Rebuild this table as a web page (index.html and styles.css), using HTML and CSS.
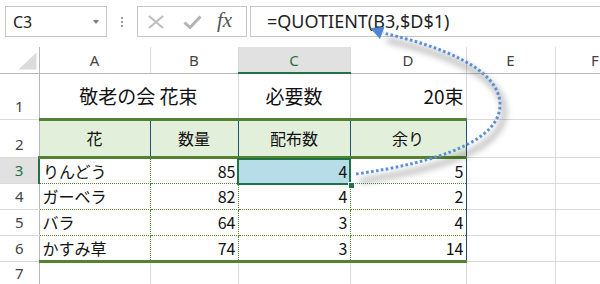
FILE: index.html
```html
<!DOCTYPE html>
<html lang="ja">
<head>
<meta charset="utf-8">
<title>QUOTIENT</title>
<link rel="stylesheet" href="styles.css">
</head>
<body>
<div class="fbar">
  <div class="namebox"><span>C3</span><span class="caret"></span></div>
  <div class="grip"><i></i><i></i><i></i></div>
  <div class="fxbox">
    <svg class="ico-x" width="16" height="14" viewBox="0 0 16 14"><path d="M1 1 L15 13 M15 1 L1 13" stroke="#bdbdbd" stroke-width="2" fill="none"/></svg>
    <svg class="ico-ok" width="19" height="14" viewBox="0 0 19 14"><path d="M1.5 7.5 L7 12.5 L17.5 1.5" stroke="#b3b3b3" stroke-width="3" fill="none"/></svg>
    <span class="fx">fx</span>
  </div>
  <div class="input">=QUOTIENT(B3,$D$1)</div>
</div>
<table class="sheet">
  <colgroup><col class="c0"><col class="ca"><col class="cb"><col class="cc"><col class="cd"><col class="ce"><col class="cf"></colgroup>
  <tr class="hr">
    <th class="corner"><div class="tri"></div></th><th>A</th><th>B</th><th class="on">C</th><th>D</th><th>E</th><th>F</th>
  </tr>
  <tr class="r1">
    <th class="rh">1</th><td colspan="2" class="ctr big">敬老の会 花束</td><td class="ctr big">必要数</td><td class="num big">20束</td><td></td><td></td>
  </tr>
  <tr class="r2">
    <th class="rh">2</th><td class="hd">花</td><td class="hd">数量</td><td class="hd">配布数</td><td class="hd">余り</td><td></td><td></td>
  </tr>
  <tr class="rd">
    <th class="rh on">3</th><td class="dt">りんどう</td><td class="dt num">85</td><td class="dt num sel">4<div class="selbox"></div><div class="handle"></div></td><td class="dt num last">5</td><td></td><td></td>
  </tr>
  <tr class="rd">
    <th class="rh">4</th><td class="dt">ガーベラ</td><td class="dt num">82</td><td class="dt num">4</td><td class="dt num last">2</td><td></td><td></td>
  </tr>
  <tr class="rd">
    <th class="rh">5</th><td class="dt">バラ</td><td class="dt num">64</td><td class="dt num">3</td><td class="dt num last">4</td><td></td><td></td>
  </tr>
  <tr class="rd end">
    <th class="rh">6</th><td class="dt">かすみ草</td><td class="dt num">74</td><td class="dt num">3</td><td class="dt num last">14</td><td></td><td></td>
  </tr>
  <tr class="r7">
    <th class="rh">7</th><td></td><td></td><td></td><td></td><td></td><td></td>
  </tr>
</table>
<svg class="arrow" width="600" height="284" viewBox="0 0 600 284">
  <defs>
    <filter id="blur" x="-20%" y="-20%" width="140%" height="140%"><feGaussianBlur stdDeviation="3"/></filter>
  </defs>
  <path d="M356 174 C440 162 502 140 500 103 C498 68 440 46 383 33" transform="translate(4 7)" stroke="#000" stroke-opacity="0.28" stroke-width="5" fill="none" filter="url(#blur)"/>
  <path d="M356 174 C440 162 502 140 500 103 C498 68 440 46 383 33" stroke="#5b8fd8" stroke-width="3" stroke-dasharray="2.6 2.4" fill="none"/>
  <polygon points="370,28 384.5,27 380,39" fill="#4f86d6"/>
</svg>
</body>
</html>
```
FILE: styles.css
```css
* { box-sizing: border-box; }
html, body { margin: 0; padding: 0; background: #fff; }
body {
  width: 600px; height: 284px; overflow: hidden; position: relative;
  font-family: "Noto Sans", "Noto Sans CJK JP", sans-serif; color: #111;
}

/* formula bar */
.fbar { display: flex; align-items: flex-start; height: 47px; padding: 6px 0 0 5px; }
.namebox {
  width: 102px; height: 31px; border: 1px solid #c6c6c6;
  display: flex; align-items: center; justify-content: space-between;
  padding: 0 7px; font-size: 16px; color: #222;
}
.caret { width: 0; height: 0; border-left: 3.5px solid transparent; border-right: 3.5px solid transparent; border-top: 4px solid #7a7a7a; }
.grip { display: flex; flex-direction: column; gap: 2px; margin: 11px 0 0 14px; width: 3px; }
.grip i { display: block; width: 2px; height: 2px; background: #9a9a9a; }
.fxbox {
  margin-left: 13px; width: 110px; height: 31px; border: 1px solid #c6c6c6;
  display: flex; align-items: center; padding-left: 10px;
}
.ico-ok { margin-left: 19px; }
.fx {
  margin-left: 15px; font-family: "Liberation Serif", serif; font-style: italic;
  font-size: 21px; color: #555; line-height: 29px; position: relative; top: -1px;
}
.input {
  margin-left: 3px; flex: 1; height: 31px; border: 1px solid #c6c6c6; border-right: none;
  padding-left: 16px; font-size: 18px; line-height: 28px; color: #222; white-space: nowrap;
}

/* sheet */
.sheet { border-collapse: collapse; table-layout: fixed; width: 635px; }
.c0 { width: 39px; } .ca { width: 111px; } .cb { width: 88px; } .cc { width: 112px; }
.cd { width: 116px; } .ce { width: 89px; } .cf { width: 80px; }

.sheet th { font-weight: normal; color: #444; font-size: 15px; padding: 0; line-height: 20px; }
.hr th { height: 26px; border-right: 1px solid #dadada; border-bottom: 1px solid #b8b8b8; text-align: center; vertical-align: middle; }
.hr th.corner { border-right: 1px solid #b8b8b8; vertical-align: bottom; padding: 0 2px 3px 0; }
.tri { width: 18px; height: 17px; margin-left: auto; background: #dcdcdc; clip-path: polygon(100% 0, 100% 100%, 0 100%); }
.hr th.on { background: #e1e1e1; color: #217346; border-bottom: 2px solid #217346; }

.sheet th.rh { border-right: 1px solid #b8b8b8; border-bottom: 1px solid #dadada; text-align: center; vertical-align: bottom; padding-bottom: 3px; }
.sheet th.rh.on { background: #e1e1e1; color: #217346; border-right: 2px solid #217346; }

.sheet td {
  border-right: 1px solid #dadada; border-bottom: 1px solid #dadada;
  padding: 0 3px; font-family: "Noto Sans CJK JP", "Noto Sans", sans-serif;
  font-size: 16px; line-height: 20px; vertical-align: middle; white-space: nowrap; overflow: visible;
}
.r1 td { height: 46px; }
.r2 td { height: 38px; }
.rd td { height: 26px; }
.rd:first-of-type td { height: 27px; }
.r7 td, .sheet .r7 th { height: 25px; }

.big { font-size: 19px !important; }
.ctr { text-align: center; }
.num { text-align: right; padding-right: 2px !important; }

.sheet td.hd {
  background: #e2efda; text-align: center;
  border-top: 3px solid #548235; border-bottom: 3px solid #548235; border-right: 1px solid #1f4e78;
}
.sheet td.dt { border-right: 1px dotted #548235; border-bottom: 1px dotted #548235; }
.sheet td.dt.last { border-right: 1px solid #1f4e78; }
.end td.dt { border-bottom: 3px solid #548235; }

.sheet td.sel { background: #b7dee8; position: relative; }
.selbox { position: absolute; left: -2px; top: -1px; right: -1px; bottom: -2px; border: 2px solid #217346; pointer-events: none; }
.handle { position: absolute; right: -5px; bottom: -6px; width: 7px; height: 7px; background: #217346; border: 1px solid #fff; }

.arrow { position: absolute; left: 0; top: 0; pointer-events: none; }
```
